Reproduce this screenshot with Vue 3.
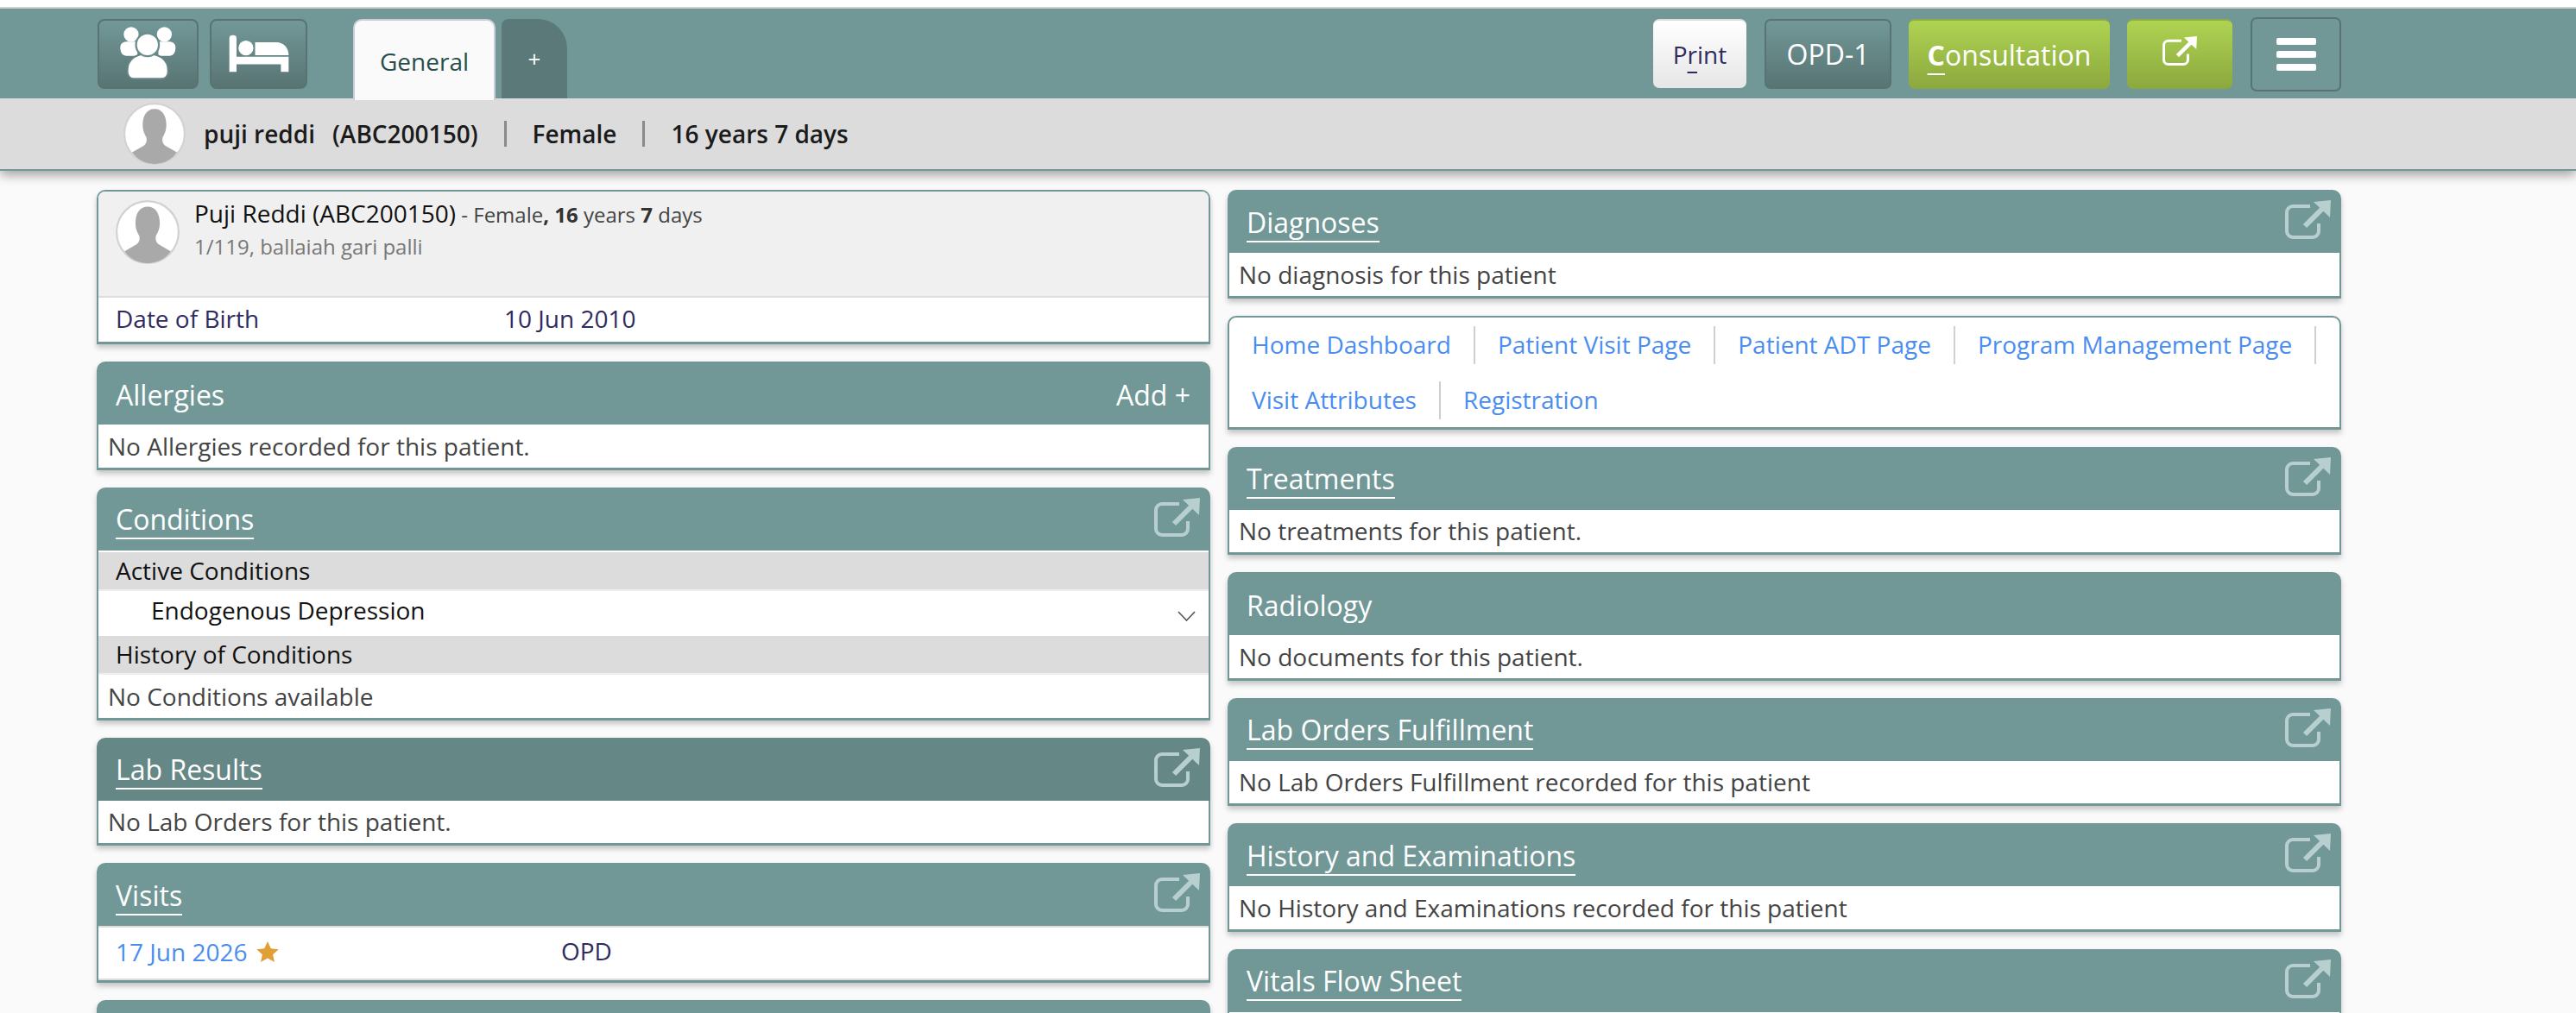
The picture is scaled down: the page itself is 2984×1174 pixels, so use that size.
<template>
  <div class="page">
    <!-- Top bar -->
    <header class="topbar">
      <div class="nav">
        <button class="nav-btn btn-people">
          <svg width="67" height="63" viewBox="85 60 200 190">
            <circle cx="126" cy="90" r="26" fill="#fff" />
            <circle cx="242" cy="90" r="26" fill="#fff" />
            <path d="M88 135c0-12 8-18 20-20h40v50h-38c-14 0-22-10-22-30z" fill="#fff" />
            <path d="M281 135c0-12-8-18-20-20h-40v50h38c14 0 22-10 22-30z" fill="#fff" />
            <path d="M113 215c0-38 30-58 70-58s72 20 72 58v6c0 14-10 24-24 24h-94c-14 0-24-10-24-24z" fill="#fff" stroke="#668584" stroke-width="6" />
            <circle cx="183" cy="126" r="40" fill="#fff" stroke="#6b8e8d" stroke-width="7" />
          </svg>
        </button>
        <button class="nav-btn btn-bed">
          <svg width="72" height="46" viewBox="460 85 217 138">
            <path d="M465 100a12 10 0 0 1 25 0v65h182v53h-27v-26H490v26h-25z" fill="#fff" />
            <circle cx="523" cy="135" r="26" fill="#fff" />
            <path d="M555 115h75c24 0 42 20 42 45H555z" fill="#fff" />
          </svg>
        </button>
        <div class="tabs">
          <div class="tab tab-active">General</div>
          <div class="tab tab-add">+</div>
        </div>
        <div class="nav-right">
          <button class="btn btn-print">P<span class="key">r</span>int</button>
          <button class="btn btn-dark">OPD-1</button>
          <button class="btn btn-green btn-consult"><span class="key key-bold">C</span>onsultation</button>
          <button class="btn btn-green btn-ext">
            <svg width="40" height="34" viewBox="0 0 53 45">
              <path d="M29 7H9a7 7 0 0 0-7 7v22a7 7 0 0 0 7 7h23a7 7 0 0 0 7-7v-9" fill="none" stroke="#fff" stroke-width="4" />
              <path d="M33 2l20-2-1 20z" fill="#fff" />
              <path d="M44 9L23 30" stroke="#fff" stroke-width="6" />
            </svg>
          </button>
          <button class="btn btn-menu">
            <span /><span /><span />
          </button>
        </div>
      </div>
      <div class="patient-bar">
        <svg class="avatar" width="72" height="72" viewBox="0 0 100 100">
          <circle cx="50" cy="50" r="48.5" fill="#fff" stroke="#d2d2d2" stroke-width="3" />
          <path :d="silhouette" fill="#a9a9a9" />
        </svg>
        <span class="pb-name">puji reddi</span>
        <span class="pb-id">(ABC200150)</span>
        <span class="pb-sep" />
        <span class="pb-item">Female</span>
        <span class="pb-sep" />
        <span class="pb-item">16 years 7 days</span>
      </div>
    </header>

    <main class="columns">
      <section class="column">
        <!-- Patient summary -->
        <div class="card card-patient">
          <div class="patient-top">
            <svg width="74" height="74" viewBox="0 0 100 100">
              <circle cx="50" cy="50" r="48.5" fill="#fff" stroke="#d2d2d2" stroke-width="3" />
              <path :d="silhouette" fill="#a9a9a9" />
            </svg>
            <div class="patient-info">
              <div class="pi-line"><span class="pi-name">Puji Reddi (ABC200150)</span><span class="pi-sub"> - Female<b>, 16</b> years <b>7</b> days</span></div>
              <div class="pi-address">1/119, ballaiah gari palli</div>
            </div>
          </div>
          <div class="patient-dob">
            <span class="dob-label">Date of Birth</span>
            <span>10 Jun 2010</span>
          </div>
        </div>

        <div class="card">
          <div class="card-head">
            <span class="head-plain">Allergies</span>
            <span class="head-add">Add +</span>
          </div>
          <div class="card-body">No Allergies recorded for this patient.</div>
        </div>

        <div class="card">
          <div class="card-head">
            <span class="head-link">Conditions</span>
            <svg class="ext-icon" width="53" height="45" viewBox="0 0 53 45"><use href="#ext" /></svg>
          </div>
          <div class="card-rows">
            <div class="band">Active Conditions</div>
            <div class="cond-row">
              <span class="cond-name">Endogenous Depression</span>
              <svg width="21" height="12" viewBox="0 0 21 12"><path d="M1 1l9.500 10L20 1" fill="none" stroke="#555" stroke-width="1.6" /></svg>
            </div>
            <div class="band">History of Conditions</div>
            <div class="none-row">No Conditions available</div>
          </div>
        </div>

        <div class="card card-hover">
          <div class="card-head">
            <span class="head-link">Lab Results</span>
            <svg class="ext-icon" width="53" height="45" viewBox="0 0 53 45"><use href="#ext" /></svg>
          </div>
          <div class="card-body">No Lab Orders for this patient.</div>
        </div>

        <div class="card">
          <div class="card-head">
            <span class="head-link">Visits</span>
            <svg class="ext-icon" width="53" height="45" viewBox="0 0 53 45"><use href="#ext" /></svg>
          </div>
          <div class="card-rows visit-rows">
            <div class="visit-row">
              <span class="visit-date">17 Jun 2026
                <svg width="26" height="25" viewBox="0 0 26 25"><path d="M13 0l3.800 8.200 9 1-6.700 6 1.900 8.800L13 19.500 5 24l1.900-8.800-6.700-6 9-1z" fill="#e0a035" /></svg>
              </span>
              <span class="visit-type">OPD</span>
            </div>
          </div>
        </div>

        <div class="card">
          <div class="card-head" />
        </div>
      </section>

      <section class="column">
        <div class="card">
          <div class="card-head">
            <span class="head-link">Diagnoses</span>
            <svg class="ext-icon" width="53" height="45" viewBox="0 0 53 45"><use href="#ext" /></svg>
          </div>
          <div class="card-body">No diagnosis for this patient</div>
        </div>

        <div class="card card-links">
          <a v-for="link in links" :key="link" class="quick-link">{{ link }}</a>
        </div>

        <div v-for="item in rightCards" :key="item.title" class="card">
          <div class="card-head">
            <span :class="item.noLink ? 'head-plain' : 'head-link'">{{ item.title }}</span>
            <svg v-if="!item.noLink" class="ext-icon" width="53" height="45" viewBox="0 0 53 45"><use href="#ext" /></svg>
          </div>
          <div class="card-body">{{ item.text }}</div>
        </div>
      </section>
    </main>

    <!-- shared open-in-new icon -->
    <svg class="defs" width="0" height="0">
      <defs>
        <g id="ext">
          <path d="M29 7H9a7 7 0 0 0-7 7v22a7 7 0 0 0 7 7h23a7 7 0 0 0 7-7v-9" fill="none" stroke="#b8cfcf" stroke-width="4" />
          <path d="M33 2l20-2-1 20z" fill="#b8cfcf" />
          <path d="M44 9L23 30" stroke="#b8cfcf" stroke-width="6" />
        </g>
      </defs>
    </svg>
  </div>
</template>

<script setup>
const silhouette =
  'M50 10C38 10 31 20 31 36c0 10 4 16 6 20 1 6 0 10-4 13L14 80c8 12 22 18.500 36 18.500S78 92 86 80L67 69c-4-3-5-7-4-13 2-4 6-10 6-20 0-16-7-26-19-26z'

const links = [
  'Home Dashboard',
  'Patient Visit Page',
  'Patient ADT Page',
  'Program Management Page',
  'Visit Attributes',
  'Registration',
]

const rightCards = [
  { title: 'Treatments', text: 'No treatments for this patient.' },
  { title: 'Radiology', text: 'No documents for this patient.', noLink: true },
  { title: 'Lab Orders Fulfillment', text: 'No Lab Orders Fulfillment recorded for this patient' },
  { title: 'History and Examinations', text: 'No History and Examinations recorded for this patient' },
  { title: 'Vitals Flow Sheet', text: '' },
]
</script>

<style>
html, body { margin: 0; background: #fafafa; }
</style>

<style scoped>
.page {
  height: 1174px;
  overflow: hidden;
  background: #fafafa;
  font-family: "Open Sans", sans-serif;
  font-size: 28px;
  color: #444;
}

.defs { position: absolute; }

.topbar {
  padding-top: 8px;
  background: #fff;
  box-shadow: 0 5px 12px rgba(0, 0, 0, 0.35);
  position: relative;
}

.nav {
  height: 106px;
  box-sizing: border-box;
  border-top: 2px solid #cfcfcf;
  background: #719897;
  display: flex;
  align-items: flex-start;
  padding: 12px 272px 0 113px;
}

.nav-btn {
  height: 81px;
  box-sizing: border-box;
  padding: 0 0 2px;
  border: 2px solid #587372;
  border-radius: 8px;
  background: linear-gradient(#719897, #587473);
  display: flex;
  align-items: center;
  justify-content: center;
}
.btn-people { width: 117px; }
.btn-bed { width: 113px; margin-left: 13px; }

.tabs {
  display: flex;
  align-items: flex-start;
  margin-left: 53px;
  gap: 7px;
}
.tab {
  height: 94px;
  box-sizing: border-box;
  display: flex;
  align-items: center;
  justify-content: center;
}
.tab-active {
  width: 165px;
  background: #fafafa;
  border: 2px solid #ccd;
  border-bottom: none;
  border-radius: 10px 10px 0 0;
  color: #274d4c;
  position: relative;
  z-index: 2;
  height: 94px;
  padding-top: 2px;
}
.tab-add {
  width: 76px;
  height: 92px;
  background: #5b7978;
  color: #fff;
  font-size: 26px;
  border-radius: 8px 34px 0 0;
}

.nav-right {
  margin-left: auto;
  display: flex;
  align-items: flex-start;
}
.btn {
  height: 81px;
  box-sizing: border-box;
  padding: 0;
  border-radius: 7px;
  font-family: inherit;
  font-size: 32px;
  color: #fff;
  display: flex;
  align-items: center;
  justify-content: center;
  margin-left: 21px;
}
.btn-print {
  width: 108px;
  height: 80px;
  margin-left: 0;
  border: 0;
  border-top: 2px solid #ddd;
  background: linear-gradient(#fff, #e6e6e6);
  color: #2f2b5f;
  font-size: 28px;
}
.btn-dark {
  width: 147px;
  border: 2px solid #587372;
  background: linear-gradient(#719897, #587473);
}
.btn-green {
  border: 0;
  border-top: 2px solid #90ad45;
  background: linear-gradient(#afd352, #8ba83e);
}
.btn-consult { width: 233px; margin-left: 20px; }
.btn-ext { width: 122px; margin-left: 20px; padding-bottom: 10px; }
.btn-menu {
  width: 105px;
  height: 86px;
  margin-left: 21px;
  margin-top: -2px;
  border: 2px solid #587372;
  background: #719897;
  flex-direction: column;
  gap: 7px;
}
.btn-menu span {
  width: 46px;
  height: 8px;
  border-radius: 2px;
  background: #fff;
}

.key {
  text-decoration: underline;
  text-decoration-thickness: 2px;
  text-underline-offset: 9px;
}
.key-bold { font-weight: 700; }

.patient-bar {
  height: 84px;
  box-sizing: border-box;
  border-bottom: 2px solid #719897;
  background: #dcdcdc;
  display: flex;
  align-items: center;
  padding-left: 143px;
  font-weight: 600;
  color: #1b1b1b;
}
.avatar { margin-right: 21px; }
.pb-id { margin-left: 20px; }
.pb-sep {
  width: 3px;
  height: 30px;
  background: #8a8a8a;
  margin: 0 30px;
}

.columns {
  display: flex;
  gap: 20px;
  padding: 22px 272px 0 112px;
}
.column { width: 1290px; }

.card {
  margin-bottom: 20px;
  border-radius: 10px 10px 0 0;
  box-shadow: 0 4px 6px rgba(0, 0, 0, 0.22);
  background: #fff;
}
.card-head {
  height: 73px;
  box-sizing: border-box;
  background: #719897;
  border-radius: 10px 10px 0 0;
  display: flex;
  align-items: center;
  justify-content: space-between;
  padding: 0 12px 0 22px;
  color: #fff;
  font-size: 32px;
}
.card-hover .card-head { background: #658786; }

.head-link {
  padding-top: 4px;
  line-height: 42px;
  border-bottom: 2px solid #fff;
}
.head-plain { line-height: 42px; padding-top: 4px; }
.head-add { margin-right: 11px; padding-top: 4px; }
.ext-icon { margin-top: -4px; }

.card-body {
  height: 52.5px;
  box-sizing: border-box;
  border: 2px solid #719897;
  border-width: 0 2px 3px;
  display: flex;
  align-items: center;
  padding-left: 11px;
  color: #444;
}

.card-patient {
  height: 179px;
  box-sizing: border-box;
  border: 2px solid #719897;
  border-bottom-width: 3px;
  display: flex;
  flex-direction: column;
  color: #2f2b5f;
}
.patient-top {
  height: 123px;
  box-sizing: border-box;
  background: #f0f0f0;
  border-bottom: 2px solid #ddd;
  border-radius: 8px 8px 0 0;
  display: flex;
  padding: 10px 20px;
  gap: 17px;
}
.patient-info { margin-top: -1px; }
.pi-line { line-height: 32px; }
.pi-name { font-size: 28px; color: #111; }
.pi-sub { font-size: 24px; color: #444; }
.pi-sub b { font-weight: 700; color: #333; }
.pi-address { font-size: 24px; line-height: 32px; color: #777; margin-top: 5px; }
.patient-dob {
  flex: 1;
  display: flex;
  align-items: center;
  padding: 0 0 4px 20px;
}
.dob-label { width: 450px; }

.card-rows {
  border: 2px solid #719897;
  border-width: 0 2px 3px;
  padding-top: 2px;
  color: #111;
}
.band {
  height: 45px;
  box-sizing: border-box;
  background: #dcdcdc;
  border-bottom: 2px solid #eee;
  display: flex;
  align-items: center;
  padding-left: 20px;
}
.cond-row {
  height: 52px;
  box-sizing: border-box;
  display: flex;
  align-items: center;
  justify-content: space-between;
  padding: 0 15px 0 61px;
}
.cond-name { margin-bottom: 8px; }
.cond-row svg { margin-top: 6px; }
.none-row {
  height: 50px;
  display: flex;
  align-items: center;
  padding-left: 11px;
  color: #444;
}

.visit-rows { background: #fff; box-shadow: inset 0 2px 0 #ddd; }
.visit-row {
  height: 61px;
  box-sizing: border-box;
  border-bottom: 2px solid #ddd;
  padding-left: 20px;
  display: flex;
  position: relative;
}
.visit-date {
  width: 516px;
  padding-top: 4px;
  color: #4a8df0;
  display: flex;
  align-items: center;
  gap: 11px;
  height: 48px;
}
.visit-type { color: #2f2b5f; padding-top: 8px; }

.card-links {
  height: 132px;
  box-sizing: border-box;
  border: 2px solid #719897;
  border-bottom-width: 3px;
  padding: 10px 0 0 0;
  display: flex;
  flex-wrap: wrap;
  align-content: flex-start;
  row-gap: 20px;
}
.quick-link {
  height: 44px;
  line-height: 42px;
  padding: 0 26px;
  border-right: 2px solid #d0d0d0;
  color: #4a8df0;
}
.quick-link:nth-child(6) { border-right: 0; }
</style>
